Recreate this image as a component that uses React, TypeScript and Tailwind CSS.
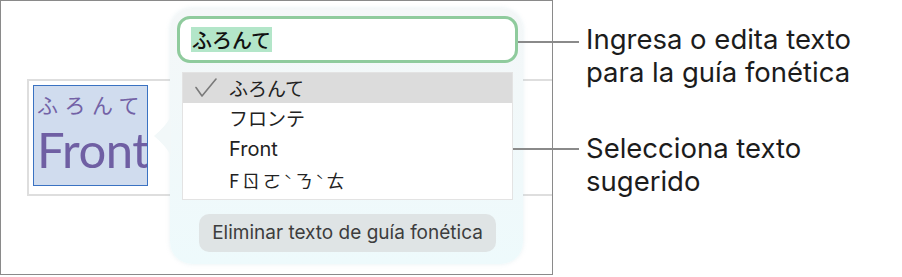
import React from "react";

const jp = { fontFamily: '"Noto Sans CJK JP", "Noto Sans", sans-serif' };

function Check() {
  return (
    <svg width="22" height="20" viewBox="0 0 22 20" className="shrink-0">
      <polyline points="1,9.5 7,18 21,1" fill="none" stroke="#7a7a7a" strokeWidth="1.6" strokeLinecap="round" strokeLinejoin="round" />
    </svg>
  );
}

export default function App() {
  return (
    <div className="relative flex w-[902px] h-[277px] bg-white font-['Inter',_'Liberation_Sans',_sans-serif]">
      {/* screenshot frame */}
      <div className="relative w-[553px] h-[275px] border border-[#8a8a8a] overflow-hidden">
        {/* document text box */}
        <div className="ml-[26px] mt-[78px] h-[117px] border-2 border-r-0 border-[#dedede] pl-[4px] pt-[4px]">
          <div className="w-[115px] h-[101px] border-[1.5px] border-[#3a72c2] bg-[#d0dcee] overflow-hidden pl-[3px]">
            <div className="text-[21px] leading-[26px] tracking-[6.5px] text-[#7362a6] mt-[5px] whitespace-nowrap" style={jp}>
              ふろんて
            </div>
            <div className="text-[49px] leading-[60px] text-[#6f5fa3] whitespace-nowrap font-['Lato',_sans-serif] mt-[2px] tracking-[-0.5px]">
              Front
            </div>
          </div>
        </div>

        {/* popover */}
        <div className="absolute left-[169px] top-[7px] w-[353px] h-[256px] rounded-[22px] bg-gradient-to-b from-[#f4f7f8] to-[#eefafc] shadow-[0_0_4px_rgba(160,200,210,0.25)] pl-[7px] pt-[8px] flex flex-col">
          <svg className="absolute left-[-17px] top-[108px]" width="18" height="40" viewBox="0 0 18 40">
            <path d="M18 0 C14 8 8 14 1 20 C8 26 14 32 18 40 Z" fill="#f2f8f9" />
          </svg>
          {/* input */}
          <div className="w-[341px] h-[47px] rounded-[13px] border-[3px] border-[#8fcb9d] bg-white flex items-center pl-[11px]">
            <span className="bg-[#b3e6c9] text-[20px] leading-[25px] font-medium text-[#111] px-[1px]" style={jp}>
              ふろんて
            </span>
          </div>
          {/* suggestions list */}
          <div className="ml-[5px] mt-[9px] w-[331px] h-[128px] border border-[#e3e3e3] bg-white flex flex-col">
            <div className="h-[30px] bg-[#dcdcdc] flex items-center pl-[12px] gap-[12px]">
              <Check />
              <span className="text-[19px] leading-[24px] text-[#222]" style={jp}>ふろんて</span>
            </div>
            <div className="h-[30px] flex items-center pl-[46px]">
              <span className="text-[19px] leading-[24px] text-[#222]" style={jp}>フロンテ</span>
            </div>
            <div className="h-[31px] flex items-center pl-[46px]">
              <span className="text-[20px] leading-[24px] text-[#222]">Front</span>
            </div>
            <div className="h-[31px] flex items-center pl-[46px]">
              <span className="text-[18px] leading-[24px] text-[#222] tracking-[3px]" style={jp}>
                Fㄖㄛ<span className="text-[13px] align-top">ˋ</span>ㄋ<span className="text-[13px] align-top">ˋ</span>ㄊ
              </span>
            </div>
          </div>
          {/* remove button */}
          <div className="ml-[22px] mt-[14px] w-[297px] h-[38px] rounded-[10px] bg-[#dfe4e5] flex items-center justify-center">
            <span className="text-[19px] leading-[22px] text-[#3d3d3d] whitespace-nowrap">Eliminar texto de guía fonética</span>
          </div>
        </div>
      </div>

      {/* callout lines */}
      <div className="absolute left-[518px] top-[41px] w-[61px] h-[2px] bg-[#8a8a8a]" />
      <div className="absolute left-[513px] top-[148px] w-[66px] h-[2px] bg-[#8a8a8a]" />

      {/* callout texts */}
      <div className="ml-[33px] flex flex-col text-[27.5px] leading-[33px] text-[#1c1c1c]">
        <div className="mt-[23px]">
          <div>Ingresa o edita texto</div>
          <div>para la guía fonética</div>
        </div>
        <div className="mt-[43px]">
          <div>Selecciona texto</div>
          <div>sugerido</div>
        </div>
      </div>
    </div>
  );
}
